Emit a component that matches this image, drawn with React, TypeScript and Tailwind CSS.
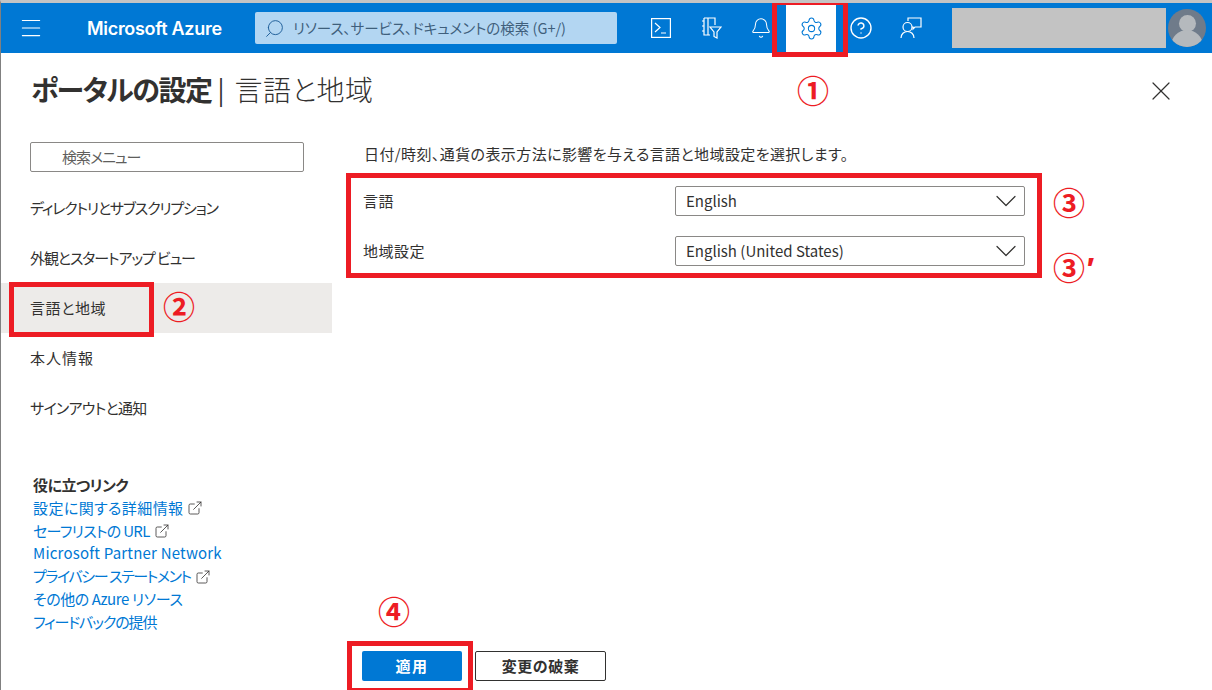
import { ChevronDown, X, Menu, Search, Bell, Settings, CircleHelp, ExternalLink } from "lucide-react";

const font = "font-['Noto_Sans_CJK_JP','Noto_Sans',sans-serif] [font-feature-settings:'palt']";

const navItems = [
  { label: "ディレクトリとサブスクリプション", tracking: "tracking-[-1.2px]" },
  { label: "外観とスタートアップ ビュー", tracking: "tracking-[-1.1px]" },
  { label: "言語と地域", tracking: "tracking-[0.6px]" },
  { label: "本人情報", tracking: "tracking-[1px]" },
  { label: "サインアウトと通知", tracking: "tracking-[-0.7px]" },
];

const links = [
  { label: "設定に関する詳細情報", ext: true, tracking: "tracking-[0.4px]" },
  { label: "セーフリストの URL", ext: true, tracking: "tracking-[-0.7px]" },
  { label: "Microsoft Partner Network", ext: false, tracking: "tracking-[0.2px]" },
  { label: "プライバシー ステートメント", ext: true, tracking: "tracking-[-1.4px]" },
  { label: "その他の Azure リソース", ext: false, tracking: "tracking-[-0.4px]" },
  { label: "フィードバックの提供", ext: false, tracking: "tracking-[-1.100px]" },
];

function HeaderIcons() {
  return (
    <div className="flex h-full ml-[19px]">
      <div className="w-[50px] flex items-center justify-center">
        <svg width="20" height="20" viewBox="0 0 20 20" fill="none" stroke="#fff" strokeWidth="1.2">
          <rect x="0.6" y="0.6" width="18.8" height="18.8" />
          <path d="M4 5l5 4.5L4 14M10 15h5" />
        </svg>
      </div>
      <div className="w-[50px] flex items-center justify-center">
        <svg width="22" height="22" viewBox="0 0 22 22" fill="none" stroke="#fff" strokeWidth="1.2">
          <path d="M4 1h11v7M4 1v17h6M8 1v17M2 4h2M2 9h2M2 14h2" />
          <path d="M10 10h11l-4 5v6l-3-1.5V15z" />
        </svg>
      </div>
      <div className="w-[50px] flex items-center justify-center">
        <Bell size={22} color="#fff" strokeWidth={1.1} />
      </div>
      <div className="w-[50px] bg-white flex items-center justify-center">
        <Settings size={25} color="#0078d4" strokeWidth={1} />
      </div>
      <div className="w-[50px] flex items-center justify-center">
        <CircleHelp size={24} color="#fff" strokeWidth={1.4} />
      </div>
      <div className="w-[50px] flex items-center justify-center">
        <svg width="22" height="22" viewBox="0 0 22 22" fill="none" stroke="#fff" strokeWidth="1.2">
          <circle cx="7.5" cy="10" r="4.5" />
          <path d="M1 21c0-4 3-6.500 6.500-6.500S14 17 14 21" />
          <path d="M8 4V1h13v9h-6l-2 2v-2h-1" />
        </svg>
      </div>
    </div>
  );
}

function Avatar() {
  return (
    <div className="w-[38px] h-[38px] rounded-full bg-[#6f7b8a] overflow-hidden flex flex-col items-center ml-[2px]">
      <div className="w-[17px] h-[19px] mt-[6px] rounded-full bg-[#b5b9bd]" />
      <div className="w-[32px] h-[20px] -mt-[2px] rounded-t-full bg-[#b5b9bd]" />
    </div>
  );
}

function Field({ label, value }: { label: string; value: string }) {
  return (
    <div className="flex items-center h-[30px] -ml-[1px]">
      <span className="w-[312px] text-[15px] tracking-[0.5px] text-[#323130]">{label}</span>
      <div className="w-[350px] h-[30px] border border-[#8a8886] rounded-[2px] flex items-center justify-between pl-[10px] text-[15px] text-[#323130]">
        <span>{value}</span>
        <ChevronDown size={36} strokeWidth={0.8} color="#323130" className="shrink-0" />
      </div>
    </div>
  );
}

export default function App() {
  return (
    <div className={`relative w-[1212px] h-[690px] overflow-hidden bg-white border-l border-[#808080] border-t-[3px] border-t-[#c4c4c4] ${font}`}>
      <header className="h-[50px] bg-[#0078d4] flex items-center">
        <div className="w-[60px] flex justify-center">
          <Menu size={26} color="#fff" strokeWidth={1} />
        </div>
        <span className="ml-[26px] w-[168px] text-[18px] font-semibold text-white font-['Inter',sans-serif] tracking-[-0.3px]">Microsoft Azure</span>
        <div className="w-[362px] h-[32px] rounded-[2px] bg-[#b3d6f2] flex items-center pl-[9px] gap-[8px] text-[14.500px] text-[#3f5f7c]">
          <Search size={21} strokeWidth={1.1} color="#1f5f99" className="-scale-x-100" />
          <span>リソース、サービス、ドキュメントの検索 (G+/)</span>
        </div>
        <HeaderIcons />
        <div className="w-[214px] h-[40px] bg-[#c3c3c3] ml-[16px] -mt-[1px]" />
        <Avatar />
      </header>

      <div className="flex items-center justify-between pl-[30px] pr-[35px] h-[75px]">
        <h1 className="flex items-center text-[#323130] leading-none mb-[4px]">
          <span className="font-bold text-[28px] tracking-[-1.500px]">ポータルの設定</span>
          <span className="font-normal text-[26px] ml-[6px]">|</span>
          <span className="font-light text-[28px] tracking-[0.5px] ml-[10px]">言語と地域</span>
        </h1>
        <X size={32} strokeWidth={0.9} color="#323130" />
      </div>

      <div className="flex">
        <aside className="w-[331px] shrink-0 pt-[14px]">
          <div className="ml-[29px] w-[274px] h-[30px] border border-[#8a8886] rounded-[2px] flex items-center pl-[31px] text-[15px] tracking-[-1px] text-[#605e5c]">
            検索メニュー
          </div>
          <nav className="mt-[11px]">
            {navItems.map((item) => (
              <div key={item.label} className={`h-[50px] flex items-center pl-[29px] text-[15px] ${item.tracking} text-[#323130] ${item.label === "言語と地域" ? "bg-[#edebe9]" : ""}`}>
                {item.label}
              </div>
            ))}
          </nav>
          <div className="ml-[32px] mt-[41px] text-[15px] leading-[22.800px]">
            <div className="font-bold text-[#323130] tracking-[-0.5px]">役に立つリンク</div>
            {links.map((link) => (
              <div key={link.label} className={`flex items-center gap-[4px] text-[#0078d4] ${link.tracking}`}>
                <span>{link.label}</span>
                {link.ext && <ExternalLink size={16} strokeWidth={1.2} color="#323130" />}
              </div>
            ))}
          </div>
        </aside>

        <main className="flex-1 flex flex-col pl-[32px] pt-[13px] h-[562px]">
          <p className="text-[15px] tracking-[0.4px] text-[#323130] leading-[26px]">日付/時刻、通貨の表示方法に影響を与える言語と地域設定を選択します。</p>
          <div className="mt-[19px] flex flex-col gap-[20px]">
            <Field label="言語" value="English" />
            <Field label="地域設定" value="English (United States)" />
          </div>
          <div className="mt-auto mb-[9px] -ml-[2px] flex gap-[13px]">
            <button className="w-[100px] h-[30px] rounded-[2px] bg-[#0078d4] text-white text-[15px] tracking-[1.5px] font-bold">適用</button>
            <button className="w-[131px] h-[30px] rounded-[2px] border border-[#323130] text-[#323130] text-[15px] tracking-[0.5px] font-bold">変更の破棄</button>
          </div>
        </main>
      </div>

      {/* red callouts drawn over the screenshot */}
      <div className="absolute left-[771px] -top-[3px] w-[76px] h-[57px] border-[5px] border-[#ed1c24]" />
      <div className="absolute left-[8px] top-[279px] w-[145px] h-[55px] border-[5px] border-[#ed1c24]" />
      <div className="absolute left-[345px] top-[170px] w-[696px] h-[105px] border-[5px] border-[#ed1c24]" />
      <div className="absolute left-[346px] top-[638px] w-[126px] h-[52px] border-[5px] border-[#ed1c24]" />

      <span className="absolute left-[796px] top-[66px] text-[32px] leading-[40px] font-bold text-[#ed1c24]">①</span>
      <span className="absolute left-[162px] top-[282px] text-[32px] leading-[40px] font-bold text-[#ed1c24]">②</span>
      <span className="absolute left-[1052px] top-[178px] text-[32px] leading-[40px] font-bold text-[#ed1c24]">③</span>
      <span className="absolute left-[1052px] top-[243px] text-[32px] leading-[40px] font-bold text-[#ed1c24]">③<span className="italic font-['Liberation_Sans',sans-serif]">′</span></span>
      <span className="absolute left-[377px] top-[587px] text-[32px] leading-[40px] font-bold text-[#ed1c24]">④</span>
    </div>
  );
}
